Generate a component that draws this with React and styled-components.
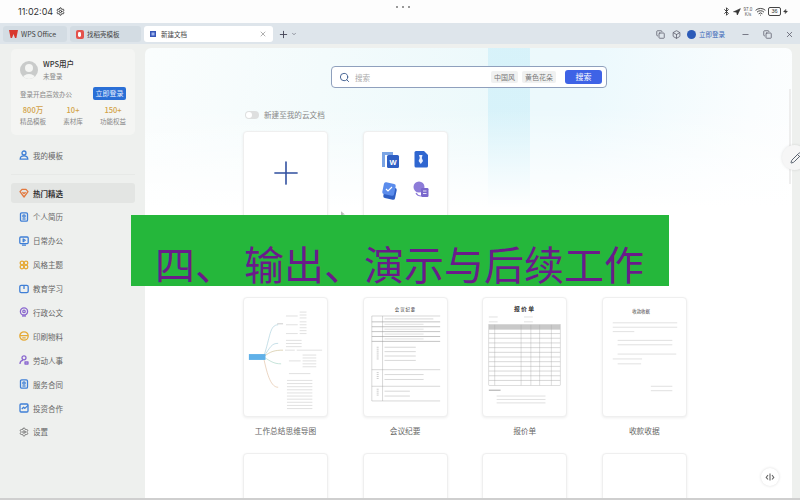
import styled, { createGlobalStyle } from "styled-components";
import { Bluetooth, Navigation, Wifi, Settings, Search, X, Plus, ChevronDown, Minus, Copy, Box, Pencil, Zap } from "lucide-react";

const GlobalStyle = createGlobalStyle`
  html, body { margin: 0; padding: 0; width: 800px; height: 500px; overflow: hidden; }
  body { font-family: "Noto Sans CJK SC", "Liberation Sans", sans-serif; background: #eef0ee; }
`;

const Page = styled.div`
  position: relative;
  width: 800px;
  height: 500px;
  display: flex;
  flex-direction: column;
  overflow: hidden;
  background: #eef0ee;
`;

const StatusBar = styled.div`
  height: 23px;
  flex: none;
  box-sizing: border-box;
  display: grid;
  grid-template-columns: 1fr 1fr 1fr;
  align-items: center;
  padding: 0 12px 0 18px;
  background: #fdfdfd;
  color: #333;
`;
const Clock = styled.div`
  display: flex;
  align-items: center;
  gap: 3px;
  font: 9px "Inter", "Liberation Sans", sans-serif;
`;
const Dots = styled.div`
  display: flex;
  justify-content: center;
  gap: 4px;
  margin-bottom: 9px;
`;
const Dot = styled.span`
  width: 2px;
  height: 2px;
  border-radius: 50%;
  background: #777;
`;
const StatusIcons = styled.div`
  display: flex;
  justify-content: flex-end;
  align-items: center;
  gap: 2px;
`;
const NetSpeed = styled.span`
  font: 4.5px/5px "Liberation Sans", sans-serif;
  color: #555;
  text-align: center;
  width: 10px;
`;
const Battery = styled.span`
  width: 11px;
  height: 7px;
  border: 1px solid #444;
  border-radius: 2px;
  font: 5.5px/7px "Liberation Sans", sans-serif;
  text-align: center;
`;

const TabBar = styled.div`
  height: 21px;
  flex: none;
  box-sizing: border-box;
  display: flex;
  align-items: flex-start;
  gap: 3px;
  padding: 3px 0 0 3px;
  background: #dee5eb;
`;
const Tab = styled.div`
  height: 16px;
  width: ${(p) => p.$w}px;
  display: flex;
  align-items: center;
  gap: 3px;
  padding: 0 6px;
  box-sizing: border-box;
  border-radius: 3px;
  font-size: ${(p) => p.$font || 6.5}px;
  color: #444;
  background: ${(p) => (p.$active ? "#fff" : "#d3dce3")};
`;
const TabLabel = styled.span`
  margin-left: 2px;
`;
const TabClose = styled.span`
  margin-left: auto;
  display: flex;
  color: #888;
`;
const TabAdd = styled.div`
  height: 16px;
  display: flex;
  align-items: center;
  gap: 2px;
  margin-left: 2px;
  color: #445;
`;
const WinTools = styled.div`
  height: 16px;
  margin-left: auto;
  display: flex;
  align-items: center;
  color: #556;
`;
const LoginLink = styled.span`
  display: flex;
  align-items: center;
  gap: 3px;
  margin-right: 9px;
  font-size: 6.5px;
  color: #3867b8;
`;
const UserDot = styled.span`
  width: 9px;
  height: 9px;
  border-radius: 50%;
  background: #2c5bb8;
`;
const WinButton = styled.span`
  width: 22px;
  display: flex;
  justify-content: center;
`;

const Body = styled.div`
  flex: 1;
  min-height: 0;
  display: flex;
  border-bottom: 2px solid #cfcfcf;
`;

const Sidebar = styled.aside`
  width: 145px;
  flex: none;
  box-sizing: border-box;
  padding: 5px 10px 0 11px;
`;
const ProfileCard = styled.div`
  height: 86px;
  box-sizing: border-box;
  padding: 9px 9px 0;
  border-radius: 5px;
  background: #f4f5f3;
`;
const ProfileTop = styled.div`
  display: flex;
  align-items: center;
  gap: 5px;
`;
const Avatar = styled.div`
  position: relative;
  width: 18px;
  height: 18px;
  border-radius: 50%;
  overflow: hidden;
  background: #c9cbca;
  &::before {
    content: "";
    position: absolute;
    left: 5px;
    top: 3px;
    width: 8px;
    height: 8px;
    border-radius: 50%;
    background: #f4f5f3;
  }
  &::after {
    content: "";
    position: absolute;
    left: 3px;
    top: 13px;
    width: 12px;
    height: 8px;
    border-radius: 50%;
    background: #f4f5f3;
  }
`;
const UserName = styled.div`
  font-size: 7.5px;
  font-weight: 500;
  line-height: 12px;
  color: #333;
`;
const UserState = styled.div`
  font-size: 6.5px;
  line-height: 12px;
  color: #888;
`;
const LoginRow = styled.div`
  display: flex;
  align-items: center;
  justify-content: space-between;
  margin-top: 5px;
  font-size: 6.5px;
  color: #888;
`;
const LoginButton = styled.span`
  width: 33px;
  height: 13px;
  border-radius: 2px;
  background: #2a6fd6;
  color: #e8f0ff;
  font-size: 7px;
  line-height: 13px;
  text-align: center;
`;
const Stats = styled.div`
  display: flex;
  justify-content: space-between;
  margin-top: 4px;
  text-align: center;
`;
const StatNum = styled.div`
  font-size: 7.5px;
  font-weight: 500;
  line-height: 12px;
  color: #d2a146;
`;
const StatLabel = styled.div`
  font-size: 6.5px;
  line-height: 11px;
  color: #888;
`;
const MenuRow = styled.div`
  height: 20px;
  margin-bottom: 3.9px;
  display: flex;
  align-items: center;
  gap: 4px;
  padding-left: 8px;
  border-radius: 3px;
  font-size: 7.5px;
  color: ${(p) => (p.$active ? "#333" : "#666")};
  font-weight: ${(p) => (p.$active ? 700 : 400)};
  background: ${(p) => (p.$active ? "#e3e5e3" : "transparent")};
`;
const Divider = styled.div`
  height: 1px;
  margin: 9px 0 8px;
  background: #e7e9e7;
`;
const MineRow = styled(MenuRow)`
  margin: 10px 0 0;
`;

const Main = styled.main`
  width: 647px;
  flex: none;
  position: relative;
  box-sizing: border-box;
  padding: 18px 0 0 98px;
  border-radius: 6px 6px 0 0;
  margin-top: 4px;
  overflow: hidden;
  background:
    linear-gradient(180deg, rgba(255, 255, 255, 0) 60px, #fff 160px),
    linear-gradient(90deg, transparent 343px, rgba(190, 234, 248, 0.45) 343px, rgba(190, 234, 248, 0.45) 385px, transparent 385px),
    linear-gradient(100deg, #fafdfd 0, #ecf9fb 50%, #ecf9fd 62%, #fafdfe 85%, #fff 100%);
`;
const SearchBox = styled.div`
  width: 276px;
  height: 22px;
  box-sizing: border-box;
  margin-left: 88px;
  display: flex;
  align-items: center;
  gap: 4px;
  padding: 0 4px 0 7px;
  border: 1px solid #8fa0bd;
  border-radius: 4px;
  background: #fff;
`;
const SearchHint = styled.span`
  font-size: 7.5px;
  color: #aaa;
  margin-right: auto;
  margin-left: 1px;
`;
const Chip = styled.span`
  height: 12px;
  padding: 0 3px;
  border-radius: 2px;
  background: #f0f1f1;
  color: #777;
  font-size: 7px;
  line-height: 12px;
`;
const SearchButton = styled.span`
  width: 37px;
  height: 14px;
  margin-left: 5px;
  border-radius: 3px;
  background: #3e63e6;
  color: #fff;
  font-size: 8px;
  line-height: 14px;
  text-align: center;
`;
const CloudRow = styled.div`
  display: flex;
  align-items: center;
  gap: 5px;
  margin: 21px 0 0 2px;
  font-size: 7.6px;
  color: #888;
`;
const Toggle = styled.span`
  width: 14px;
  height: 8px;
  border-radius: 4px;
  background: #dedfdf;
  position: relative;
  &::after {
    content: "";
    position: absolute;
    left: 1px;
    top: 1px;
    width: 6px;
    height: 6px;
    border-radius: 50%;
    background: #fff;
  }
`;
const CardGrid = styled.div`
  display: grid;
  grid-template-columns: repeat(4, 85px);
  column-gap: 34.6px;
  margin-top: ${(p) => p.$top}px;
`;
const CardCell = styled.div`
  display: flex;
  flex-direction: column;
  align-items: center;
`;
const Card = styled.div`
  width: 85px;
  height: 120px;
  box-sizing: border-box;
  border-radius: 4px;
  background: #fff;
  border: 1px solid #efefef;
  box-shadow: 0 1px 3px rgba(0, 0, 0, 0.07);
  display: flex;
  align-items: ${(p) => p.$align || "center"};
  justify-content: center;
  overflow: hidden;
`;
const PlusMark = styled.span`
  display: flex;
  margin-top: 22px;
  color: #2f4f9f;
`;
const CardName = styled.div`
  margin-top: 7px;
  height: 13px;
  font-size: 7.7px;
  line-height: 13px;
  color: #666;
  white-space: nowrap;
`;
const Handle = styled.div`
  position: absolute;
  right: 1px;
  top: 41px;
  width: 2px;
  height: 95px;
  background: #eee;
`;
const FloatButton = styled.div`
  position: absolute;
  left: 616px;
  top: 420px;
  width: 18px;
  height: 18px;
  border-radius: 50%;
  background: #fff;
  box-shadow: 0 0 3px rgba(0, 0, 0, 0.14);
  display: flex;
  align-items: center;
  justify-content: center;
  color: #666;
`;
const EditButton = styled.div`
  position: absolute;
  left: 782px;
  top: 145px;
  width: 25px;
  height: 25px;
  border-radius: 50%;
  background: #f6f6f6;
  box-shadow: 0 0 3px rgba(0, 0, 0, 0.12);
  color: #5a6370;
  display: flex;
  align-items: center;
  padding-left: 8px;
  box-sizing: border-box;
`;
const Cursor = styled.svg`
  position: absolute;
  left: 341px;
  top: 211px;
`;
const Banner = styled.div`
  position: absolute;
  left: 131px;
  top: 215px;
  width: 538px;
  height: 71px;
  box-sizing: border-box;
  padding: 28px 0 0 24px;
  background: #25b73b;
  color: #6a1b8a;
  font-size: 40px;
  line-height: 40px;
  white-space: pre;
`;

const MENU = [
  ["热门精选", "#e2793f", "heart"],
  ["个人简历", "#3f7fd6", "doc"],
  ["日常办公", "#3f7fd6", "screen"],
  ["风格主题", "#e5a935", "flower"],
  ["教育学习", "#3f7fd6", "book"],
  ["行政公文", "#8a68cf", "seal"],
  ["印刷物料", "#e5a935", "print"],
  ["劳动人事", "#8a68cf", "person"],
  ["服务合同", "#3f7fd6", "doc"],
  ["投资合作", "#3f7fd6", "chart"],
  ["设置", "#666", "gear"],
];

const MenuIcon = ({ kind, color }) => {
  if (kind === "gear") return <Settings size={10} color={color} />;
  const shapes = {
    heart: <><path d="M1 3.6 3 1.4h4l2 2.2L5 9Z" /><path d="M3.4 4.2 5 5.6l1.6-1.4" /></>,
    doc: <><rect x="1.5" y="0.8" width="7" height="8.4" rx="1.2" /><circle cx="5" cy="4" r="1.2" /><path d="M3.4 7h3.2" /></>,
    screen: <><rect x="0.8" y="1" width="8.4" height="6.6" rx="1" /><path d="M3 9.2h4M4.2 3l2 1.3-2 1.3Z" /></>,
    flower: <><circle cx="3" cy="3" r="1.8" /><circle cx="7" cy="3" r="1.8" /><circle cx="3" cy="7" r="1.8" /><circle cx="7" cy="7" r="1.8" /></>,
    book: <><rect x="0.8" y="1.3" width="8.4" height="7.4" rx="1.4" /><path d="M5 1.3v3.6" /></>,
    seal: <><circle cx="5" cy="4.4" r="3.6" /><circle cx="5" cy="4.4" r="1.2" /><path d="M3 9h4" /></>,
    print: <><circle cx="5" cy="5" r="4.2" /><path d="M1 4.6h8M3.3 6.8h3.4" /></>,
    person: <><circle cx="5" cy="2.8" r="2" /><path d="M1 9c0-2.4 1.4-3.6 3-3.6M6 7h3v2H6Z" /></>,
    chart: <><rect x="1" y="1" width="8" height="8" rx="1" /><path d="M2.8 6 4.6 4.2l1.2 1.2L9 2.4" /></>,
  };
  return (
    <svg width="10" height="10" viewBox="0 0 10 10" fill="none" stroke={color} strokeWidth="1.3" strokeLinejoin="round">
      {shapes[kind]}
    </svg>
  );
};

const Lines = ({ x, y, w, n, gap = 4, color = "#ccc" }) => (
  <g stroke={color} strokeWidth="0.6">
    {Array.from({ length: n }, (_, i) => (
      <line key={i} x1={x} x2={x + w} y1={y + i * gap} y2={y + i * gap} />
    ))}
  </g>
);

const MindMap = () => (
  <svg width="85" height="120" viewBox="0 0 85 120" fill="none">
    <g strokeWidth="0.6">
      <path d="M20 60C27 40 26 27 35 27" stroke="#9fc9d8" />
      <path d="M20 60C27 50 28 46 35 46" stroke="#9fc9d8" />
      <path d="M20 60C27 54 32 53 40 53" stroke="#c8b98a" />
      <path d="M20 60C27 64 30 67 38 67" stroke="#9fd0c0" />
      <path d="M20 60C24 80 28 91 35 91" stroke="#dcb898" />
    </g>
    <rect x="5" y="57" width="17" height="6" fill="#5fb0e8" />
    <Lines x={34} y={26} w={6} n={1} color="#aaa" />
    <Lines x={43} y={18} w={12} n={3} gap={9} />
    <Lines x={57} y={14} w={7} n={3} gap={3} />
    <Lines x={57} y={24} w={7} n={5} gap={3} />
    <Lines x={43} y={43} w={16} n={3} gap={3.2} />
    <Lines x={42} y={53} w={10} n={1} />
    <Lines x={54} y={53} w={26} n={1} />
    <Lines x={46} y={64} w={12} n={1} />
    <Lines x={60} y={58} w={14} n={5} gap={3} />
    <Lines x={46} y={77} w={22} n={1} />
    <Lines x={44} y={84} w={26} n={10} gap={3.2} />
  </svg>
);

const Minutes = () => (
  <svg width="85" height="120" viewBox="0 0 85 120" fill="none">
    <text x="42" y="13" textAnchor="middle" fontSize="4.5" fill="#333" fontFamily="Noto Sans CJK SC">会 议 纪 要</text>
    <g stroke="#999" strokeWidth="0.4">
      <path d="M8 18H78M8 18V105M8 105H78" />
      <Lines x={8} y={24} w={70} n={5} gap={5} color="#999" />
      <line x1="8" x2="78" y1="73" y2="73" />
      <line x1="8" x2="78" y1="90" y2="90" />
      <line x1="19" x2="19" y1="18" y2="105" />
    </g>
    <Lines x={21} y={21} w={50} n={1} color="#bbb" />
    <Lines x={21} y={26.5} w={40} n={4} gap={5} color="#ccc" />
    <Lines x={21} y={50} w={32} n={4} gap={4.5} color="#bbb" />
    <Lines x={21} y={78} w={40} n={2} gap={5} color="#bbb" />
    <Lines x={21} y={95} w={26} n={2} gap={5} color="#bbb" />
    <Lines x={13} y={50} w={2} n={7} gap={2} color="#aaa" />
    <Lines x={13} y={76} w={2} n={4} gap={2} color="#aaa" />
    <Lines x={13} y={93} w={2} n={4} gap={2} color="#aaa" />
  </svg>
);

const Quote = () => (
  <svg width="85" height="120" viewBox="0 0 85 120" fill="none">
    <text x="42" y="13" textAnchor="middle" fontSize="6" fontWeight="700" fill="#333" fontFamily="Noto Sans CJK SC">报 价 单</text>
    <Lines x={6} y={19} w={9} n={2} gap={5} />
    <Lines x={42} y={19} w={9} n={2} gap={5} />
    <rect x="6" y="27" width="73" height="5" fill="#c9c9c9" />
    <g stroke="#aaa" strokeWidth="0.4">
      <rect x="6" y="27" width="73" height="62" />
      <Lines x={6} y={36} w={73} n={11} gap={4.8} color="#bbb" />
      <path d="M12 27v62M39 27v62M49 27v62M58 27v62M70 27v62" />
    </g>
    <Lines x={6} y={94} w={12} n={1} color="#666" />
    <Lines x={14} y={100} w={50} n={3} gap={3.5} />
  </svg>
);

const Receipt = () => (
  <svg width="85" height="120" viewBox="0 0 85 120" fill="none">
    <text x="39" y="15" textAnchor="middle" fontSize="4.5" fill="#444" fontFamily="Noto Sans CJK SC">收款收据</text>
    <Lines x={10} y={25} w={66} n={2} gap={4.5} />
    <Lines x={10} y={34} w={22} n={1} />
    <Lines x={15} y={43} w={56} n={2} gap={4.5} />
    <Lines x={15} y={57} w={60} n={1} />
    <Lines x={10} y={62} w={30} n={1} />
    <Lines x={15} y={67} w={24} n={1} />
    <Lines x={49} y={90} w={22} n={2} gap={4.5} />
  </svg>
);

const Shortcuts = () => (
  <svg width="83" height="85" viewBox="1 0 83 85" fill="none">
    <path d="M19 20h11v3H22v12h-3Z" fill="#7aa4e4" />
    <rect x="24" y="23" width="12" height="13" rx="1.5" fill="#2f5fc4" />
    <text x="30" y="33" textAnchor="middle" fontSize="7.5" fontWeight="700" fill="#fff" fontFamily="Liberation Sans">W</text>
    <path d="M53 19h8l4 4v11a1.5 1.5 0 0 1-1.5 1.5H53a1.5 1.5 0 0 1-1.5-1.5V20.5A1.5 1.5 0 0 1 53 19Z" fill="#2f66d0" />
    <path d="M56 23h3.5l-.7 3 1.2 3-2.2 3-2.2-3 1.2-3Z" fill="#e8efff" />
    <rect x="21" y="55" width="12" height="12" rx="2" transform="rotate(12 27 61)" fill="#2f5fc4" />
    <rect x="20" y="51" width="12" height="12" rx="2" transform="rotate(12 26 57)" fill="#5b8cec" />
    <path d="M23 57l2 2 4-4" stroke="#fff" strokeWidth="1.1" />
    <circle cx="56" cy="55" r="5.5" fill="#8d7cd8" />
    <path d="M53 61c1 2 3 3 5 3" stroke="#8d7cd8" strokeWidth="1.2" />
    <rect x="58" y="56" width="7.5" height="9" rx="1.2" fill="#7a68cc" />
    <path d="M60 59h3.5M60 61.5h3.5" stroke="#fff" strokeWidth="0.8" />
  </svg>
);

const DOCS = [
  ["工作总结思维导图", <MindMap />],
  ["会议纪要", <Minutes />],
  ["报价单", <Quote />],
  ["收款收据", <Receipt />],
];

export default function App() {
  return (
    <Page>
      <GlobalStyle />
      <StatusBar>
        <Clock>
          11:02:04 <Settings size={9} strokeWidth={2.6} />
        </Clock>
        <Dots>
          <Dot />
          <Dot />
          <Dot />
        </Dots>
        <StatusIcons>
          <Bluetooth size={9} strokeWidth={2.4} />
          <Navigation size={8} fill="#333" />
          <NetSpeed>
            97.0
            <br />
            K/s
          </NetSpeed>
          <Wifi size={11} />
          <Battery>36</Battery>
          <Zap size={5} fill="#444" />
        </StatusIcons>
      </StatusBar>

      <TabBar>
        <Tab $w={64} $font={7}>
          <svg width="9" height="8" viewBox="0 0 9 8">
            <path d="M0 0h9L7.4 8H6L4.5 4 3 8H1.6Z" fill="#d8392f" />
          </svg>
          WPS Office
        </Tab>
        <Tab $w={71}>
          <svg width="8" height="9" viewBox="0 0 8 9">
            <rect width="8" height="9" rx="2" fill="#e4524c" />
            <rect x="2" y="2" width="3" height="5" rx="1.4" fill="#fff" />
          </svg>
          找稻壳模板
        </Tab>
        <Tab $w={129} $active>
          <svg width="6" height="6" viewBox="0 0 6 6">
            <rect width="6" height="6" fill="#3757b8" />
            <rect x="1.5" y="1.5" width="3" height="3" fill="#9fb4ee" />
          </svg>
          <TabLabel>新建文档</TabLabel>
          <TabClose>
            <X size={8} />
          </TabClose>
        </Tab>
        <TabAdd>
          <Plus size={11} />
          <ChevronDown size={6} />
        </TabAdd>
        <WinTools>
          <Copy size={9} />
          <WinButton>
            <Box size={9} />
          </WinButton>
          <LoginLink>
            <UserDot />
            立即登录
          </LoginLink>
          <WinButton>
            <Minus size={9} />
          </WinButton>
          <WinButton>
            <Copy size={9} />
          </WinButton>
          <WinButton>
            <X size={9} />
          </WinButton>
        </WinTools>
      </TabBar>

      <Body>
        <Sidebar>
          <ProfileCard>
            <ProfileTop>
              <Avatar />
              <div>
                <UserName>WPS用户</UserName>
                <UserState>未登录</UserState>
              </div>
            </ProfileTop>
            <LoginRow>
              登录开启高效办公
              <LoginButton>立即登录</LoginButton>
            </LoginRow>
            <Stats>
              <div>
                <StatNum>800万</StatNum>
                <StatLabel>精品模板</StatLabel>
              </div>
              <div>
                <StatNum>10+</StatNum>
                <StatLabel>素材库</StatLabel>
              </div>
              <div>
                <StatNum>150+</StatNum>
                <StatLabel>功能权益</StatLabel>
              </div>
            </Stats>
          </ProfileCard>
          <MineRow>
            <svg width="10" height="10" viewBox="0 0 10 10" fill="none" stroke="#3f7fd6" strokeWidth="1.3">
              <circle cx="5" cy="3" r="2" />
              <path d="M1.2 9.2c0-2.6 1.6-3.4 3.8-3.4s3.8.8 3.8 3.4Z" />
            </svg>
            我的模板
          </MineRow>
          <Divider />
          {MENU.map(([label, color, kind], i) => (
            <MenuRow key={label} $active={i === 0}>
              <MenuIcon kind={kind} color={color} />
              {label}
            </MenuRow>
          ))}
        </Sidebar>

        <Main>
          <SearchBox>
            <Search size={11} color="#3a5a8c" />
            <SearchHint>搜索</SearchHint>
            <Chip>中国风</Chip>
            <Chip>黄色花朵</Chip>
            <SearchButton>搜索</SearchButton>
          </SearchBox>
          <CloudRow>
            <Toggle />
            新建至我的云文档
          </CloudRow>
          <CardGrid $top={11}>
            <CardCell>
              <Card $align="flex-start">
                <PlusMark>
                  <Plus size={38} strokeWidth={1} />
                </PlusMark>
              </Card>
            </CardCell>
            <CardCell>
              <Card $align="flex-start">
                <Shortcuts />
              </Card>
            </CardCell>
          </CardGrid>
          <CardGrid $top={46}>
            {DOCS.map(([name, art]) => (
              <CardCell key={name}>
                <Card>{art}</Card>
                <CardName>{name}</CardName>
              </CardCell>
            ))}
          </CardGrid>
          <CardGrid $top={16}>
            {DOCS.map(([name]) => (
              <CardCell key={name}>
                <Card />
              </CardCell>
            ))}
          </CardGrid>
          <Handle />
          <FloatButton>
            <svg width="10" height="10" viewBox="0 0 10 10" fill="none" stroke="currentColor" strokeWidth="1.1">
              <path d="M3 3 1.2 5.4 3 7.5M7 3l1.8 2.4L7 7.5M5 1.5v7" />
            </svg>
          </FloatButton>
        </Main>
      </Body>

      <EditButton>
        <Pencil size={12} />
      </EditButton>
      <Cursor width="4" height="6" viewBox="0 0 5 7">
        <path d="M0 0v6l1.5-1.4L3 7l1-.6-1.3-2.2H5Z" fill="#bbb" />
      </Cursor>
      <Banner>四、 输出、演示与后续工作</Banner>
    </Page>
  );
}
